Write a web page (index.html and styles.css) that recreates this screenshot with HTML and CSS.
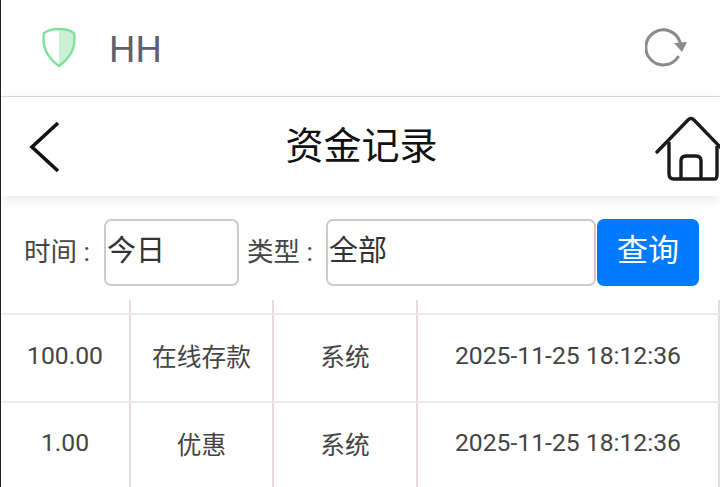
FILE: index.html
```html
<!DOCTYPE html>
<html lang="zh">
  <head>
    <meta charset="utf-8">
    <meta name="viewport" content="width=device-width,initial-scale=1">
    <title>资金记录</title>
    <link rel="stylesheet" href="styles.css">
  </head>
  <body>
    <div class="topbar">
      <svg class="shield" width="38" height="42" viewBox="0 0 38 42">
        <path d="M19 2C25 2 30 3 35 6C36 16 35 28 19 39Z" fill="#c9f0d4"/>
        <path d="M19 2C13 2 8 3 4 6C2 18 5 29 19 39C33 29 36 18 34 6C30 3 25 2 19 2Z" fill="none" stroke="#7fe0a0" stroke-width="2.400" stroke-linejoin="round"/>
      </svg>
      <span class="account">HH</span>
      <svg class="refresh" width="46" height="44" viewBox="0 0 46 44">
        <path d="M33 30A17.500 17.500 0 1 1 35 15" fill="none" stroke="#8a8a8a" stroke-width="3" stroke-linecap="round"/>
        <path d="M29 16L42 15L37 25Z" fill="#8a8a8a"/>
      </svg>
    </div>

    <div class="navbar">
      <svg class="back" width="36" height="56" viewBox="0 0 36 56">
        <path d="M31 3L5 27L31 51" fill="none" stroke="#111" stroke-width="3.600"/>
      </svg>
      <h1 class="title">资金记录</h1>
      <svg class="home" width="66" height="68" viewBox="0 0 66 68">
        <path d="M2 38L33 6Q36 3 39 6L68 36" fill="none" stroke="#1a1a1a" stroke-width="3.400" stroke-linecap="round"/>
        <path d="M14 28V60Q14 65 19 65H60Q62 65 62 60V32" fill="none" stroke="#1a1a1a" stroke-width="3.400"/>
        <path d="M26 65V47Q26 42 31 42H41Q46 42 46 47V65" fill="none" stroke="#1a1a1a" stroke-width="3.400"/>
      </svg>
    </div>

    <div class="filter">
      <label class="filter_label">时间 :</label>
      <div class="select select_time">今日</div>
      <label class="filter_label filter_label_type">类型 :</label>
      <div class="select select_type">全部</div>
      <button class="query">查询</button>
    </div>

    <table class="records">
      <tr class="head_row">
        <td></td><td></td><td></td><td></td>
      </tr>
      <tr class="row_first">
        <td>100.00</td><td>在线存款</td><td>系统</td><td>2025-11-25 18:12:36</td>
      </tr>
      <tr class="row_second">
        <td>1.00</td><td>优惠</td><td>系统</td><td>2025-11-25 18:12:36</td>
      </tr>
    </table>
  </body>
</html>
```

FILE: styles.css
```css
html {
    height: 100%;
}
body {
    margin: 0;
    height: 487px;
    overflow: hidden;
    box-sizing: border-box;
    border-left: 1px solid #222;
    background: #fff;
    font-family: Roboto, "Noto Sans CJK SC", sans-serif;
    color: #444;
}

/* top account bar */
.topbar {
    display: flex;
    align-items: center;
    height: 96px;
    padding: 0 9px 0 39px;
    border-bottom: 1px solid #dcdcdc;
}
.account {
    margin-top: 3px;
    margin-left: 31px;
    font-size: 37px;
    color: #5f6068;
}
.refresh {
    margin-left: auto;
    margin-right: 20px;
    margin-top: 2px;
}

/* page title bar */
.navbar {
    position: relative;
    display: flex;
    align-items: center;
    height: 99px;
    padding-left: 26px;
    box-shadow: 0 4px 12px rgba(0, 0, 0, 0.09);
}
.back {
    margin-top: 3px;
}
.title {
    margin: 0 0 8px;
    flex: 1;
    padding-right: 60px;
    text-align: center;
    font-size: 38px;
    font-weight: 400;
    color: #111;
}
.home {
    position: absolute;
    right: -1px;
    top: 17px;
}

/* search filter */
.filter {
    display: flex;
    align-items: center;
    height: 104px;
    padding: 8px 0 0 23px;
    box-sizing: border-box;
    font-size: 26.500px;
}
.filter_label {
    margin-top: -6px;
    color: #444;
    white-space: nowrap;
}
.select {
    box-sizing: border-box;
    height: 67px;
    padding: 0 1px 8px;
    display: flex;
    align-items: center;
    border: 2px solid #cccccc;
    border-radius: 7px;
    font-size: 29px;
    color: #333;
    background: #fff;
}
.select_time {
    width: 135px;
    margin-left: 14px;
}
.filter_label_type {
    margin-left: 8px;
}
.select_type {
    width: 270px;
    margin-left: 13px;
}
.query {
    width: 102px;
    height: 67px;
    margin-left: 1px;
    padding: 0 0 9px;
    border: 0;
    border-radius: 7px;
    background: #007bff;
    color: #fff;
    font-family: inherit;
    font-size: 31px;
}

/* record table */
.records {
    width: 719px;
    border-collapse: collapse;
    table-layout: fixed;
    font-size: 24.700px;
    color: #444;
}
.records td {
    height: 88px;
    padding: 0;
    box-sizing: border-box;
    text-align: center;
    border-right: 2px solid #eadcdc;
    border-bottom: 2px solid #efeaea;
}
.records .head_row td {
    height: 14px;
}
.records .row_first td {
    padding-bottom: 6px;
}
.records .row_second td {
    padding-bottom: 7px;
}
.records td:nth-child(1) { width: 129px; }
.records td:nth-child(2) { width: 143px; }
.records td:nth-child(3) { width: 144px; }
```
